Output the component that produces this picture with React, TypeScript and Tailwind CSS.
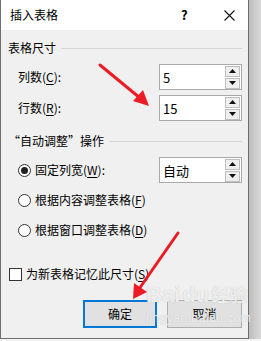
import React from "react";

const F = { fontFamily: '"Microsoft YaHei UI","Noto Sans CJK SC","Noto Sans",sans-serif' };

function Spin({ value }: { value: string }) {
  return (
    <div className="w-[83px] h-[26px] bg-white border border-[#a9a9a9] flex items-center">
      <span className="flex-1 pl-[3px] text-[13px] text-black leading-none">{value}</span>
      <div className="flex flex-col gap-[1px] mr-[1px] w-[15px]">
        <div className="h-[11px] bg-[#efefef] border border-[#bdbdbd] flex items-center justify-center">
          <svg width="7" height="4" viewBox="0 0 7 4"><path d="M0 4 L3.5 0 L7 4 Z" fill="#111" /></svg>
        </div>
        <div className="h-[11px] bg-[#efefef] border border-[#bdbdbd] flex items-center justify-center">
          <svg width="7" height="4" viewBox="0 0 7 4"><path d="M0 0 L7 0 L3.5 4 Z" fill="#111" /></svg>
        </div>
      </div>
    </div>
  );
}

function Radio({ checked }: { checked?: boolean }) {
  return (
    <div className="w-[13px] h-[13px] rounded-full border border-[#333] bg-white flex items-center justify-center shrink-0">
      {checked && <div className="w-[7px] h-[7px] rounded-full bg-[#222]" />}
    </div>
  );
}

function U({ c }: { c: string }) {
  return <span className="underline underline-offset-2">{c}</span>;
}

export default function App() {
  return (
    <div className="w-[261px] h-[341px] bg-[#f4f4f4] relative overflow-hidden text-[12px] text-black" style={F}>
      <div className="flex h-[339px]">
        <div className="w-[249px] h-[339px] border-l border-r border-b border-[#6e6e6e] bg-[#f0f0f0] flex flex-col">
          {/* title bar */}
          <div className="h-[30px] bg-white flex items-center pl-[9px] shrink-0">
            <span className="text-[12px]">插入表格</span>
            <span className="ml-[123px] text-[13px] font-bold">?</span>
            <svg className="ml-[36px]" width="11" height="11" viewBox="0 0 11 11">
              <path d="M0.5 0.5 L10.5 10.5 M10.5 0.5 L0.5 10.5" stroke="#111" strokeWidth="1.1" />
            </svg>
          </div>
          {/* body */}
          <div className="flex flex-col pl-[7px] pr-[6px]">
            <div className="h-[16px] mt-[10px] flex items-center">
              <span>表格尺寸</span>
              <div className="flex-1 h-px bg-[#d6d6d6] ml-[5px]" />
            </div>
            <div className="mt-[8px] flex items-center justify-between">
              <span className="pl-[10px]">列数(<U c="C" />):</span>
              <Spin value="5" />
            </div>
            <div className="mt-[5px] flex items-center justify-between">
              <span className="pl-[10px]">行数(<U c="R" />):</span>
              <Spin value="15" />
            </div>
            <div className="h-[16px] mt-[12px] flex items-center">
              <span>“自动调整”操作</span>
              <div className="flex-1 h-px bg-[#d6d6d6] ml-[5px]" />
            </div>
            <div className="mt-[8px] flex items-center justify-between">
              <div className="flex items-center pl-[10px] gap-[4px]">
                <Radio checked />
                <span>固定列宽(<U c="W" />):</span>
              </div>
              <Spin value="自动" />
            </div>
            <div className="mt-[9px] h-[16px] flex items-center pl-[10px] gap-[4px]">
              <Radio />
              <span>根据内容调整表格(<U c="F" />)</span>
            </div>
            <div className="mt-[14px] h-[16px] flex items-center pl-[10px] gap-[4px]">
              <Radio />
              <span>根据窗口调整表格(<U c="D" />)</span>
            </div>
            <div className="mt-[28px] h-[16px] flex items-center gap-[4px] pl-[1px]">
              <div className="w-[13px] h-[13px] border border-[#333] bg-white shrink-0" />
              <span>为新表格记忆此尺寸(<U c="S" />)</span>
            </div>
            <div className="mt-[18px] flex justify-end gap-[10px]">
              <div className="w-[74px] h-[28px] border-2 border-[#0078d7] bg-[#e1e1e1] flex items-center justify-center">确定</div>
              <div className="w-[75px] h-[28px] border border-[#adadad] bg-[#e1e1e1] flex items-center justify-center">取消</div>
            </div>
          </div>
        </div>
        <div className="flex-1 bg-gradient-to-r from-[#bdbdbd] to-[#dadada]" />
      </div>

      {/* watermark */}
      <div className="absolute left-[146px] top-[284px] pointer-events-none select-none" style={{ color: "rgba(255,255,255,0.75)", textShadow: "0 0 1px #b5b5b5" }}>
        <div className="text-[22px] font-bold leading-none" style={{ fontFamily: "Arial, sans-serif" }}>Bai<span className="ml-[2px]">du</span><span className="text-[18px] ml-[2px]" style={F}>经验</span></div>
        <div className="text-[12px] mt-[6px] leading-none tracking-[0.5px]" style={{ fontFamily: "Arial, sans-serif" }}>jingyan.baidu.com</div>
      </div>

      {/* red arrows */}
      <svg className="absolute left-0 top-0 pointer-events-none" width="261" height="341" viewBox="0 0 261 341">
        <line x1="100" y1="65" x2="140" y2="98" stroke="#ec1c24" strokeWidth="3" strokeLinecap="round" />
        <path d="M149 106 L133 101 L143 90 Z" fill="#ec1c24" />
        <line x1="178" y1="233" x2="139" y2="289" stroke="#ec1c24" strokeWidth="3" strokeLinecap="round" />
        <path d="M133 299 L134 283 L147 292 Z" fill="#ec1c24" />
      </svg>
    </div>
  );
}
